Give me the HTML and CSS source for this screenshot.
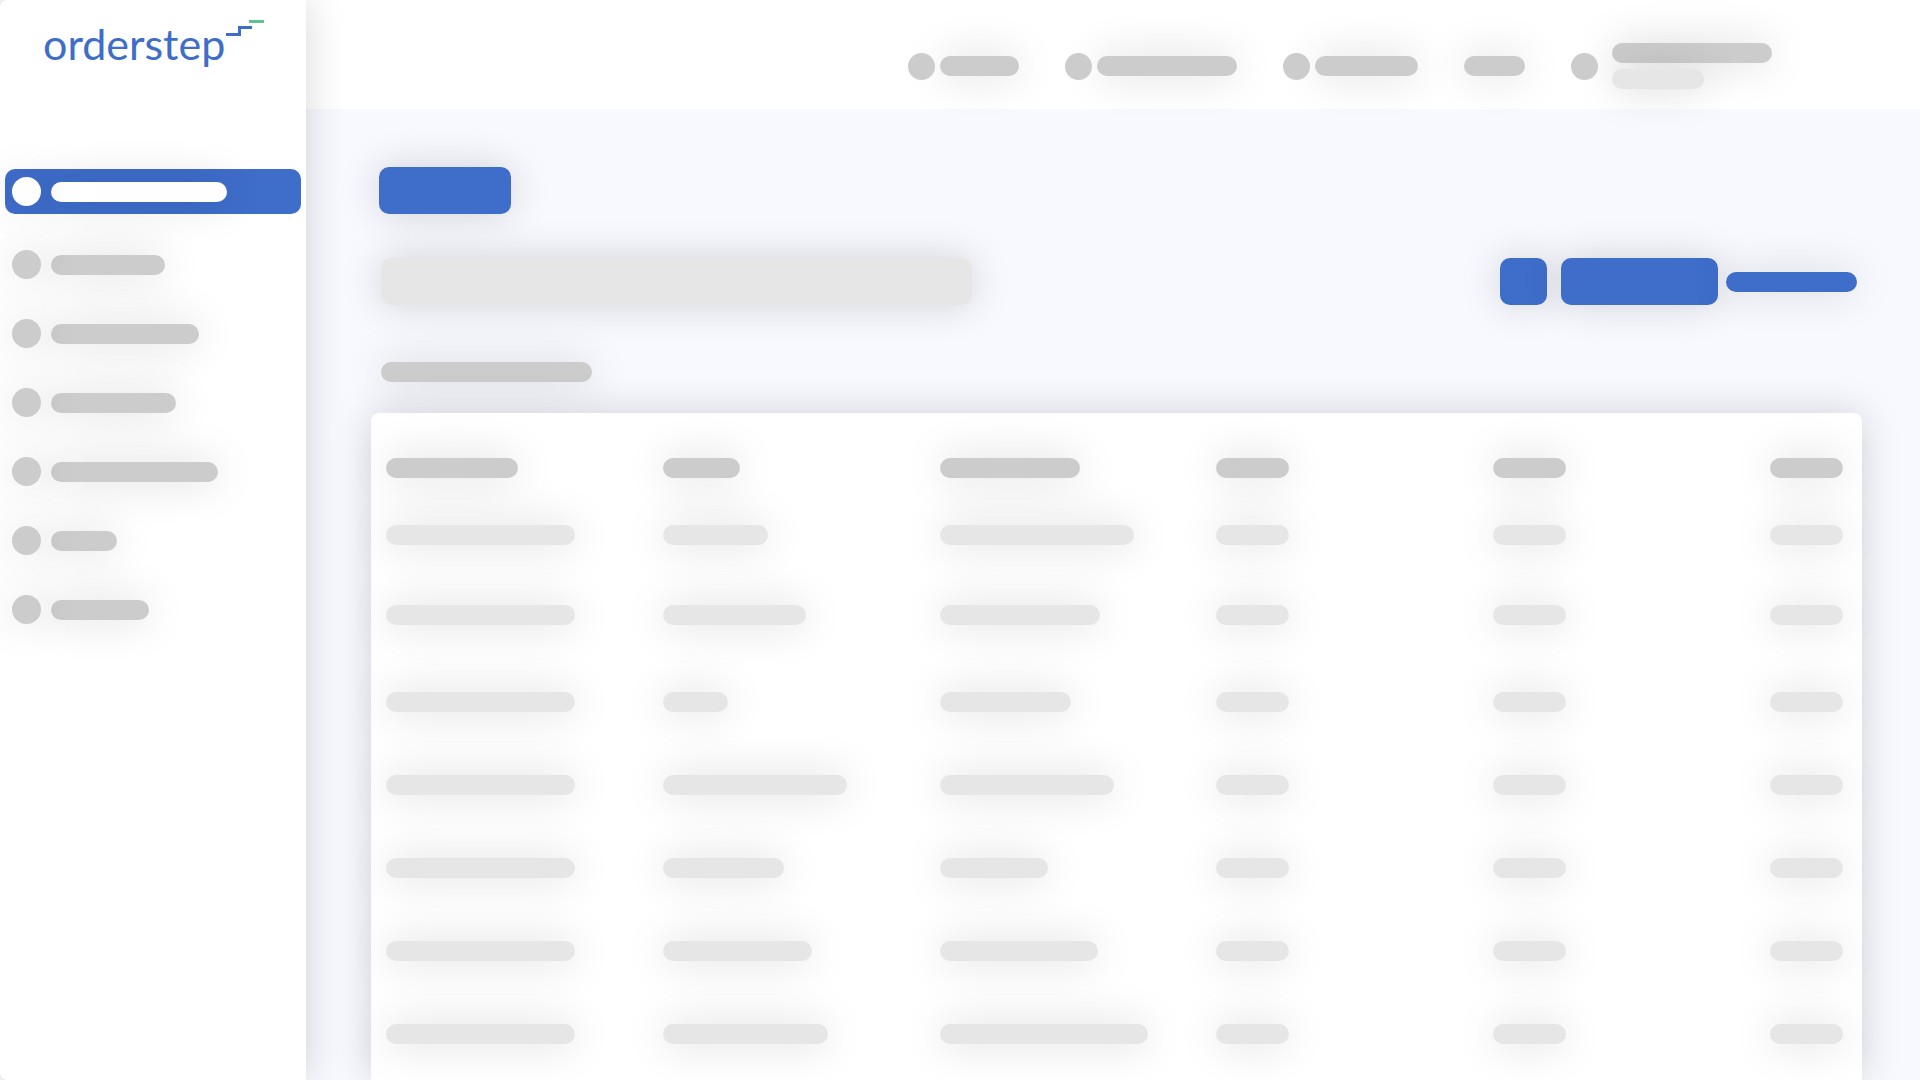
FILE: index.html
```html
<!DOCTYPE html>
<html lang="en">
<head>
  <title>orderstep</title>
  <meta charset="UTF-8">
  <meta name="viewport" content="width=device-width, initial-scale=1">
  <link rel="stylesheet" href="styles.css">
</head>
<body>
  <aside class="sidebar">
    <a class="logo" href="#" aria-label="orderstep">
      <svg width="224" height="64" viewBox="0 0 224 64">
        <text class="logo-text" x="1" y="48">orderstep</text>
        <path d="M184 22.500h13.500v-7h12.500" fill="none" stroke="#3e6dca" stroke-width="3"/>
        <path d="M207 9.500h15" fill="none" stroke="#5fc391" stroke-width="3"/>
      </svg>
    </a>
    <nav class="menu">
      <a class="menu-item active" href="#"><span class="dot"></span><span class="bar" style="width: 176px"></span></a>
      <a class="menu-item" href="#"><span class="dot"></span><span class="bar" style="width: 114px"></span></a>
      <a class="menu-item" href="#"><span class="dot"></span><span class="bar" style="width: 148px"></span></a>
      <a class="menu-item" href="#"><span class="dot"></span><span class="bar" style="width: 125px"></span></a>
      <a class="menu-item" href="#"><span class="dot"></span><span class="bar" style="width: 167px"></span></a>
      <a class="menu-item" href="#"><span class="dot"></span><span class="bar" style="width: 66px"></span></a>
      <a class="menu-item" href="#"><span class="dot"></span><span class="bar" style="width: 98px"></span></a>
    </nav>
  </aside>

  <div class="page">
    <header class="topbar">
      <a class="top-item" href="#"><span class="dot"></span><span class="bar" style="width: 79px"></span></a>
      <a class="top-item" href="#"><span class="dot"></span><span class="bar" style="width: 140px"></span></a>
      <a class="top-item" href="#"><span class="dot"></span><span class="bar" style="width: 103px"></span></a>
      <a class="top-item" href="#"><span class="bar" style="width: 61px"></span></a>
      <a class="top-item user" href="#">
        <span class="dot"></span>
        <span class="user-lines">
          <span class="bar" style="width: 160px"></span>
          <span class="bar light" style="width: 92px"></span>
        </span>
      </a>
    </header>

    <main class="content">
      <button class="btn btn-new" type="button" aria-label="New"></button>

      <div class="toolbar">
        <input class="search" type="search" aria-label="Search">
        <div class="actions">
          <button class="btn btn-icon" type="button" aria-label="Filter"></button>
          <button class="btn btn-main" type="button" aria-label="Export"></button>
          <a class="bar blue" href="#" aria-label="More" style="width: 131px"></a>
        </div>
      </div>

      <div class="caption"><span class="bar" style="width: 211px"></span></div>

      <div class="card">
        <table class="orders">
          <thead>
            <tr>
              <th><span class="bar" style="width: 132px"></span></th>
              <th><span class="bar" style="width: 77px"></span></th>
              <th><span class="bar" style="width: 140px"></span></th>
              <th><span class="bar" style="width: 73px"></span></th>
              <th><span class="bar" style="width: 73px"></span></th>
              <th class="last"><span class="bar" style="width: 73px"></span></th>
            </tr>
          </thead>
          <tbody id="rows"></tbody>
        </table>
      </div>
    </main>
  </div>

  <script>
    // bar widths for each row, one number per column
    var rows = [
      [189, 105, 194, 73, 73, 73],
      [189, 143, 160, 73, 73, 73],
      [189, 65, 131, 73, 73, 73],
      [189, 184, 174, 73, 73, 73],
      [189, 121, 108, 73, 73, 73],
      [189, 149, 158, 73, 73, 73],
      [189, 165, 208, 73, 73, 73]
    ];
    var tbody = document.getElementById("rows");

    for (var i = 0; i < rows.length; i++) {
      var tr = tbody.insertRow();
      for (var j = 0; j < rows[i].length; j++) {
        tr.insertCell().innerHTML = "<span class='bar light' style='width: " + rows[i][j] + "px'></span>";
      }
    }
  </script>
</body>
</html>
```

FILE: styles.css
```css
* {
  box-sizing: border-box;
}
body {
  margin: 0;
  min-height: 100vh;
  display: flex;
  background-color: #f8f9fe;
  font-family: Lato, "Liberation Sans", sans-serif;
}
a {
  text-decoration: none;
}

/* placeholders */
.bar {
  display: block;
  height: 20px;
  border-radius: 10px;
  background-color: #ccc;
  box-shadow: 0 0 44px rgba(0, 0, 0, 0.16);
}
.bar.light {
  background-color: #e6e6e6;
}
.bar.blue {
  background-color: #3e6dca;
}
.dot {
  flex: none;
  width: 27px;
  height: 27px;
  border-radius: 50%;
  background-color: #ccc;
}

/* sidebar */
.sidebar {
  position: relative;
  z-index: 2;
  flex: none;
  width: 306px;
  padding: 12px 5px 0;
  background-color: #fff;
  border-radius: 8px 0 0 8px;
  box-shadow: 0 0 40px rgba(0, 0, 0, 0.16);
}
.logo {
  display: block;
  height: 157px;
  padding-left: 37px;
}
.logo-text {
  font-size: 43px;
  fill: #3e6dca;
}
.menu {
  display: flex;
  flex-direction: column;
  gap: 40px;
}
.menu-item {
  display: flex;
  align-items: center;
  gap: 10px;
  height: 29px;
  padding-left: 7px;
}
.menu-item .dot {
  position: relative;
  width: 29px;
  height: 29px;
  box-shadow: 0 0 44px rgba(0, 0, 0, 0.16);
}
.menu-item.active {
  height: 45px;
  margin-bottom: -4px;
  border-radius: 10px;
  background-color: #3e6dca;
}
.menu-item.active .dot,
.menu-item.active .bar {
  background-color: #fff;
}

/* top bar */
.page {
  flex: 1;
  min-width: 0;
  display: flex;
  flex-direction: column;
}
.topbar {
  display: flex;
  justify-content: flex-end;
  align-items: center;
  gap: 46px;
  height: 109px;
  padding: 23px 148px 0 0;
  background-color: #fff;
}
.top-item {
  display: flex;
  align-items: center;
  gap: 5px;
}
.top-item .dot {
  position: relative;
}
.top-item.user {
  gap: 14px;
}
.user-lines {
  display: flex;
  flex-direction: column;
  gap: 6px;
}

/* content */
.content {
  flex: 1;
  display: flex;
  flex-direction: column;
  padding: 58px 58px 0 65px;
}
.btn {
  height: 47px;
  padding: 0;
  border: none;
  border-radius: 10px;
  background-color: #3e6dca;
  box-shadow: 0 0 40px rgba(0, 0, 0, 0.16);
  cursor: pointer;
}
.btn-new {
  width: 132px;
  margin-left: 8px;
}
.btn-icon {
  width: 47px;
  margin-right: 6px;
}
.btn-main {
  width: 157px;
}
.toolbar {
  display: flex;
  justify-content: space-between;
  align-items: center;
  margin-top: 44px;
  padding: 0 5px 0 10px;
}
.search {
  width: 591px;
  height: 47px;
  padding: 0 16px;
  border: none;
  border-radius: 10px;
  background-color: #e6e6e6;
  box-shadow: 0 0 40px rgba(0, 0, 0, 0.16);
  appearance: none;
}
.actions {
  display: flex;
  align-items: center;
  gap: 8px;
}
.caption {
  padding: 57px 10px 31px;
}

/* table */
.card {
  flex: 1;
  padding: 45px 0 0 15px;
  border-radius: 8px 8px 0 0;
  background-color: #fff;
  box-shadow: 0 0 40px rgba(0, 0, 0, 0.16);
}
.orders {
  width: 100%;
  table-layout: fixed;
  border-collapse: collapse;
}
.orders th, .orders td {
  height: 83px;
  padding: 0;
  vertical-align: top;
}
.orders th {
  height: 67px;
}
.orders .last {
  width: 92px;
}
.orders tr:nth-child(1) td {
  height: 80px;
}
.orders tr:nth-child(2) td {
  height: 87px;
}
.orders tr:last-child td {
  height: 56px;
}
```
